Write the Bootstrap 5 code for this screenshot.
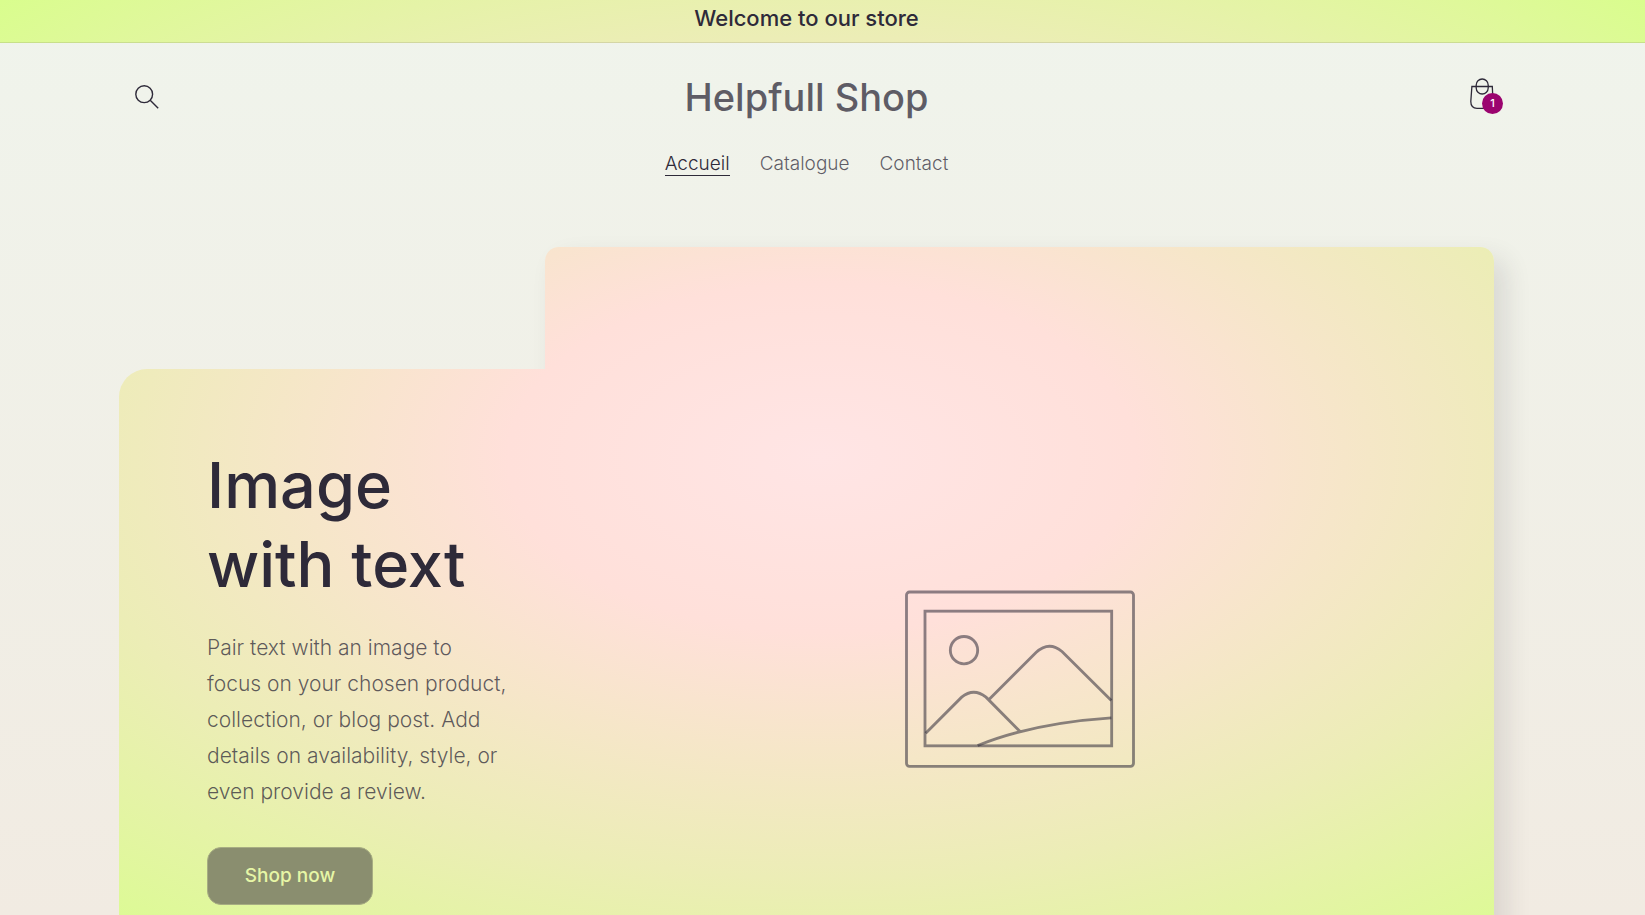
<!DOCTYPE html>
<html lang="fr">
<head>
<meta charset="utf-8">
<meta name="viewport" content="width=device-width, initial-scale=1">
<title>Helpfull Shop</title>
<link href="https://cdn.jsdelivr.net/npm/bootstrap@5.3.0/dist/css/bootstrap.min.css" rel="stylesheet">
<style>
:root {
  --ink: #2e2a39;
  --ink-soft: rgba(46, 42, 57, .75);
  --glow: radial-gradient(rgb(255, 229, 229), rgb(255, 224, 218) 27%, rgb(236, 237, 182) 65%, rgb(215, 255, 137) 104%);
}
body {
  font-family: Inter, "Liberation Sans", sans-serif;
  color: var(--ink);
  background: linear-gradient(180deg, rgb(240, 244, 236), rgb(241, 235, 226) 100%) fixed;
}
.glow { background: var(--glow) fixed; }
.announcement {
  padding: 4px 32px 10px 0;
  font-size: 22px;
  line-height: 28px;
  font-weight: 500;
  border-bottom: 1px solid rgba(46, 42, 57, .12);
}
.page { padding: 0 151px 0 119px; }
.shop-head { padding-top: 22px; }
.head-row { height: 64px; }
.side { flex: 1 1 0; }
.icon-btn { color: var(--ink); background: none; border: 0; padding: 0; display: block; position: relative; }
.bag-btn { margin-bottom: 6px; }
.shop-name { font-size: 38px; line-height: 64px; font-weight: 500; color: var(--ink-soft); text-decoration: none; }
.count {
  position: absolute; left: 12px; top: 15px; width: 21px; height: 21px; border-radius: 50%;
  background: #9b046f; color: #fff; font-size: 11px; line-height: 21px; text-align: center; font-weight: 500;
}
.menu { padding: 24px 0 71px; gap: 30px; font-size: 19px; line-height: 22px; font-weight: 300; }
.menu a { color: var(--ink-soft); text-decoration: none; border-bottom: 1px solid transparent; display: block; }
.menu a.active { color: var(--ink); border-color: var(--ink); }
.copy { position: relative; z-index: 1; width: 31%; min-height: 620px; border-radius: 28px 0 0 28px; padding: 77px 36px 80px 88px; }
.copy h2 { font-size: 63px; line-height: 79px; font-weight: 500; margin: 0 0 26px; }
.copy p { font-size: 21px; line-height: 36px; font-weight: 300; color: var(--ink-soft); margin: 0 0 37px; }
.shop-btn {
  width: 166px; height: 58px; border-radius: 14px; font-size: 19px; font-weight: 500;
  color: #e6f6a6; background: #8a8e6f; border: 1px solid #a7ad82;
}
.shot { height: 864px; border-radius: 14px; box-shadow: 12px 12px 26px rgba(46, 42, 57, .12); }
.shot svg { width: 230px; height: 178px; stroke: rgba(46, 42, 57, .55); }
</style>
</head>
<body>
<div class="announcement glow text-center">Welcome to our store</div>
<div class="page">
  <header class="shop-head">
    <div class="head-row d-flex align-items-center">
      <div class="side">
        <button class="icon-btn ms-3" type="button" aria-label="Recherche">
          <svg width="24" height="24" viewBox="0 0 24 24" fill="none" stroke="currentColor" stroke-width="1.4" class="d-block"><circle cx="9.2" cy="9.2" r="8.4"/><path d="M15.2 15.2 23.2 23.2"/></svg>
        </button>
      </div>
      <a class="shop-name" href="#">Helpfull Shop</a>
      <div class="side d-flex justify-content-end">
        <button class="icon-btn bag-btn" type="button" aria-label="Panier">
          <svg width="24" height="32" viewBox="0 0 24 32" fill="none" stroke="currentColor" stroke-width="1.3" class="d-block"><path d="M1.9 8.5H22.3L23 23.500Q23 30.300 17 30.300H7Q.8 30.300 .8 23.500Z"/><rect x="6.200" y="1" width="12" height="15" rx="6"/></svg>
          <span class="count">1</span>
        </button>
      </div>
    </div>
    <nav class="menu d-flex justify-content-center">
      <a class="active" href="#" aria-current="page">Accueil</a>
      <a href="#">Catalogue</a>
      <a href="#">Contact</a>
    </nav>
  </header>
  <main class="d-flex align-items-center">
    <section class="copy glow flex-shrink-0">
      <h2>Image with text</h2>
      <p>Pair text with an image to focus on your chosen product, collection, or blog post. Add details on availability, style, or even provide a review.</p>
      <button class="shop-btn" type="button">Shop now</button>
    </section>
    <div class="shot glow flex-grow-1 d-flex align-items-center justify-content-center">
      <svg viewBox="48 45 690 533" fill="none" stroke-width="8.500" role="img" aria-label="Image">
        <rect x="52.500" y="50.500" width="681" height="523" rx="9"/>
        <rect x="108" y="108" width="560" height="404"/>
        <circle cx="225" cy="225" r="41"/>
        <path d="M110 474 218 366Q254 336 291 366L394 470M300 373 441 232Q480 196 519 229L667 376M266 511Q430 444 667 428"/>
      </svg>
    </div>
  </main>
</div>
<script src="https://cdn.jsdelivr.net/npm/bootstrap@5.3.0/dist/js/bootstrap.bundle.min.js"></script>
</body>
</html>
